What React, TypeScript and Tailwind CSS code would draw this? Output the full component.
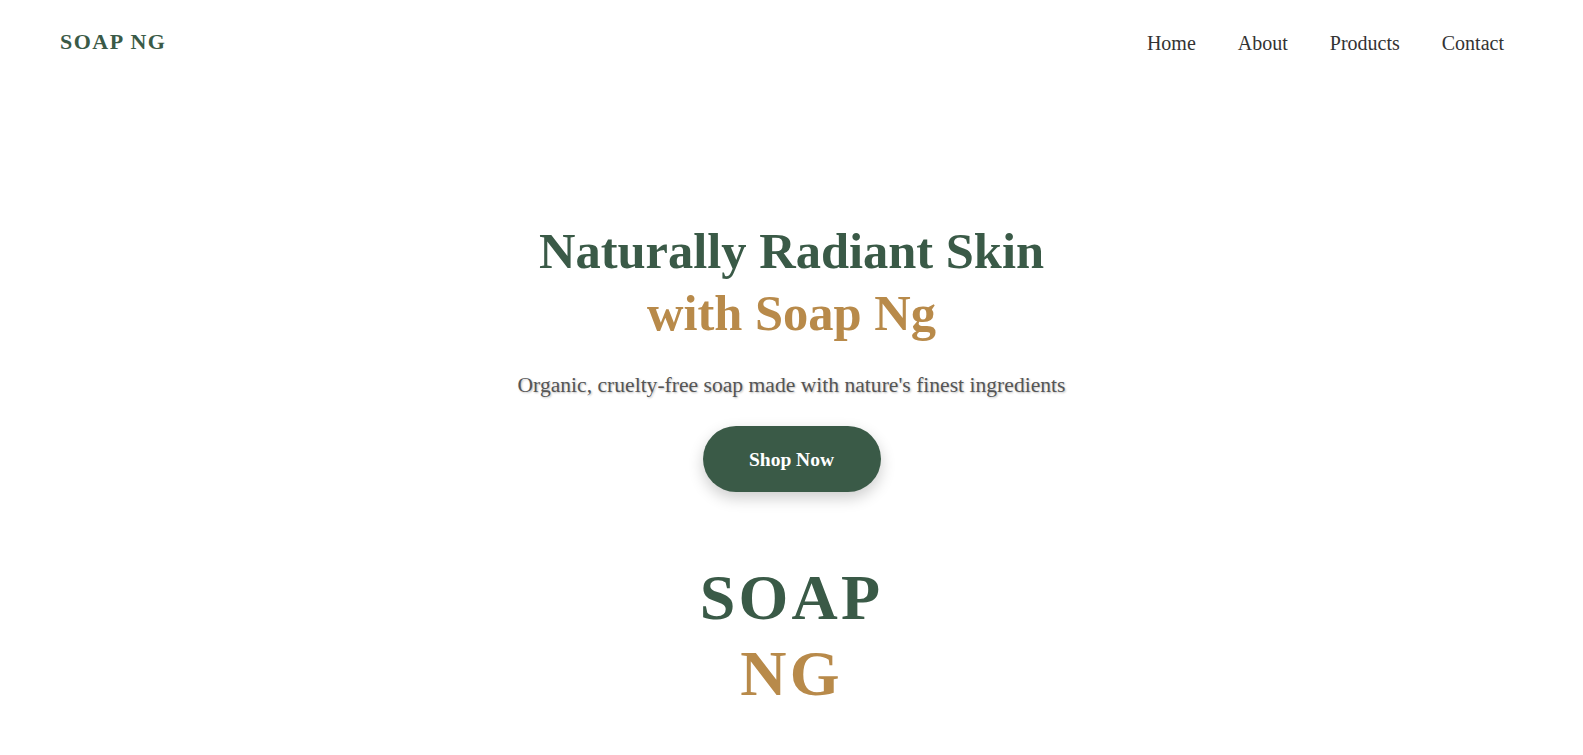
export default function App() {
  const navLinks = ['Home', 'About', 'Products', 'Contact'];

  return (
    <div className="min-h-screen bg-white font-['Liberation_Serif',serif]">
      <header className="flex items-center justify-between pl-[60px] pr-[79px] pt-[25px]">
        <div className="text-[22px] font-bold leading-[33px] tracking-[1.5px] text-[#3a5a47]">SOAP NG</div>
        <nav className="flex gap-[42px] pt-[2px]">
          {navLinks.map((link) => (
            <a key={link} href="#" className="text-[20px] text-[#333]">
              {link}
            </a>
          ))}
        </nav>
      </header>

      <main className="flex flex-col items-center pt-[162px] text-center">
        <h1 className="text-[50.5px] font-bold leading-[62px] text-[#3a5a47]">
          Naturally Radiant Skin
          <br />
          <span className="text-[#b88a4a]">with Soap Ng</span>
        </h1>
        <p className="mt-[25px] text-[21.6px] leading-[32.4px] text-[#555] [text-shadow:1px_1px_2px_rgba(0,0,0,0.25)]">
          Organic, cruelty-free soap made with nature's finest ingredients
        </p>
        <button className="mt-[25px] h-[66px] w-[178px] rounded-full bg-[#3a5a47] text-[19.5px] font-bold text-white shadow-[0_6px_15px_rgba(0,0,0,0.2)]">
          Shop Now
        </button>

        <div className="mt-[68px] text-[64px] font-bold leading-[76px] tracking-[3.2px] text-[#3a5a47]">
          SOAP
          <br />
          <span className="text-[#b88a4a]">NG</span>
        </div>
      </main>
    </div>
  );
}
